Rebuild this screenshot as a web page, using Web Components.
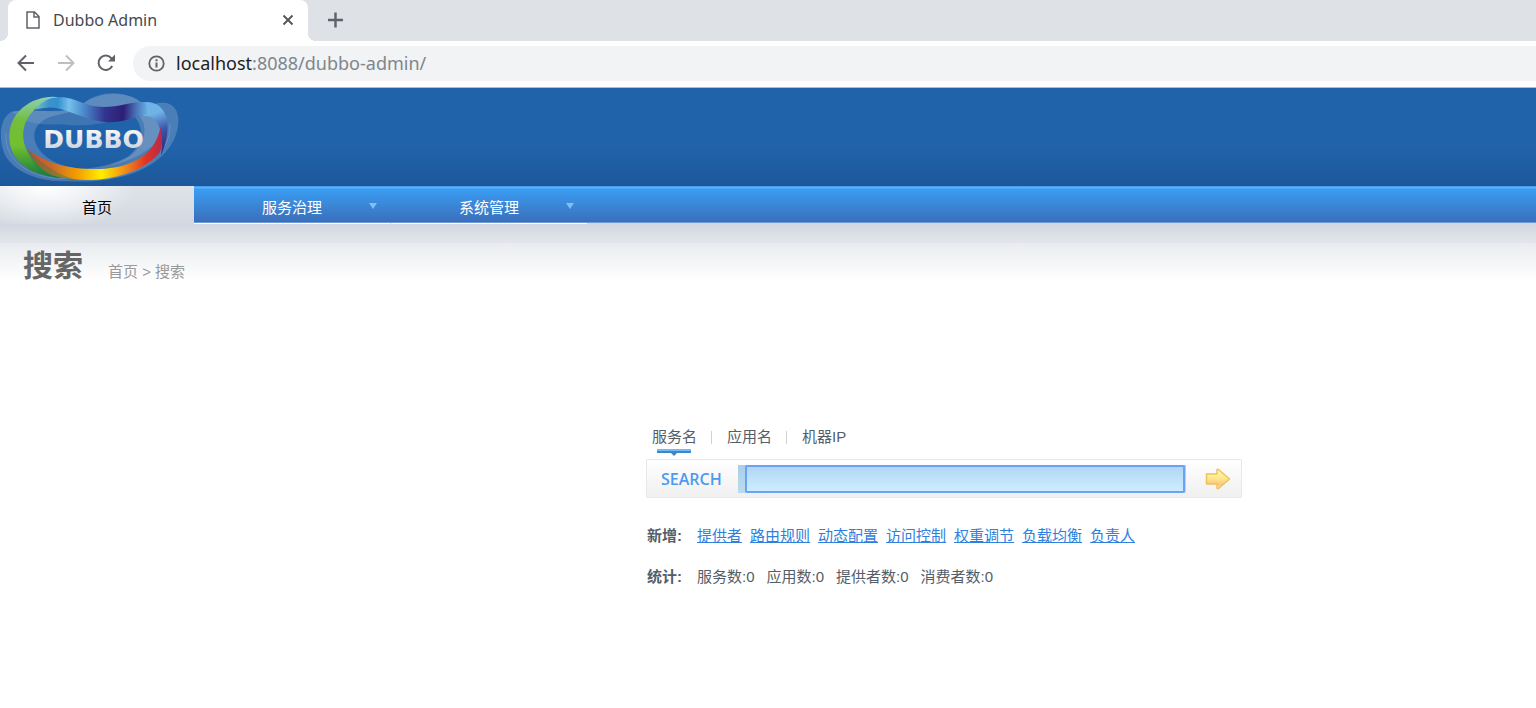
<!DOCTYPE html>
<html lang="zh-CN">
<head>
<meta charset="utf-8">
<title>Dubbo Admin</title>
<style>
  body { margin: 0; background: #fff; color: #545e69; font-family: "Liberation Sans", "Noto Sans CJK SC", sans-serif; font-size: 15px; line-height: 20px; }
</style>
</head>
<body>
<dubbo-page></dubbo-page>
<script>
function define(name, html) {
  const template = document.createElement('template');
  template.innerHTML = html;
  customElements.define(name, class extends HTMLElement {
    constructor() {
      super();
      this.attachShadow({ mode: 'open' }).append(template.content.cloneNode(true));
    }
  });
}

define('browser-tabs', `
<style>
  :host { display: flex; height: 41px; padding-left: 8px; background: #dee1e6; font: 16px/20px "Noto Sans", sans-serif; color: #45494d; }
  button { border: 0; padding: 0; background: none; display: flex; }
  .tab { position: relative; display: flex; align-items: center; box-sizing: border-box; width: 300px; padding: 0 14px 2px 18px; gap: 13px; background: #fff; border-radius: 8px 8px 0 0; }
  .tab::before, .tab::after { content: ""; position: absolute; bottom: 0; width: 8px; height: 8px; }
  .tab::before { left: -8px; background: radial-gradient(circle at 0 0, #dee1e6 8px, #fff 8px); }
  .tab::after { right: -8px; background: radial-gradient(circle at 100% 0, #dee1e6 8px, #fff 8px); }
  .name { flex: 1; }
  .new { margin: 12px 20px; }
</style>
<div class="tab">
  <svg width="14" height="18" viewBox="0 0 14 18" fill="none" stroke="#5f6368" stroke-width="1.5"><path d="M1 1H8.500L13 5.500V17H1ZM8 1V6H13"/></svg>
  <span class="name"><slot></slot></span>
  <button aria-label="Close tab"><svg width="12" height="12" viewBox="0 0 12 12" stroke="#505459" stroke-width="1.800"><path d="M1.500 1.500L10.500 10.500M10.500 1.500L1.500 10.500"/></svg></button>
</div>
<button class="new" aria-label="New tab"><svg width="15" height="16" viewBox="0 0 15 16" stroke="#5f6368" stroke-width="2.400"><path d="M7.500 .500V15.500M0 8H15"/></svg></button>`);

define('browser-toolbar', `
<style>
  :host { display: flex; align-items: center; height: 44px; padding: 0 0 2px 17px; background: #fff; border-bottom: 1px solid #b8bcc2; }
  button { border: 0; padding: 0; width: 18px; height: 18px; margin-right: 22px; background: none; display: flex; }
  svg { fill: none; stroke: #5f6368; stroke-width: 2; flex: none; }
  .address { flex: 1; display: flex; align-items: center; gap: 11px; height: 35px; margin-left: -4px; padding-left: 15px; background: #f1f3f4; border-radius: 18px 0 0 18px; }
  [role=textbox] { font: 18px/24px "Noto Sans", sans-serif; color: #80868b; }
  b { font-weight: 400; color: #202124; }
</style>
<button aria-label="Back"><svg width="18" height="18" viewBox="0 0 18 18"><path d="M17 9H2M9 1.500L1.500 9L9 16.500"/></svg></button>
<button aria-label="Forward" disabled><svg width="18" height="18" viewBox="0 0 18 18" style="stroke:#bdbfc2"><path d="M1 9H16M9 1.500L16.500 9L9 16.500"/></svg></button>
<button aria-label="Reload"><svg width="19" height="18" viewBox="0 0 19 18"><path d="M15.200 12A7.200 7.200 0 1 1 14.500 4.300L16.500 6.500"/><path d="M18 .500V7.500H11Z" fill="#5f6368" stroke="none"/></svg></button>
<div class="address">
  <svg width="17" height="17" viewBox="0 0 17 17"><circle cx="8.500" cy="8.500" r="7.200" stroke-width="1.800"/><path d="M8.500 7.500V12.500M8.500 4.300V6.200"/></svg>
  <span role="textbox" aria-label="Address"><b>localhost</b>:8088/dubbo-admin/</span>
</div>`);

define('dubbo-logo', `
<style>
  :host { display: block; width: 200px; }
  svg { display: block; }
</style>
<svg width="200" height="98" viewBox="0 6 600 294" role="img" aria-label="Dubbo">
  <defs>
    <linearGradient id="g" x1="0" y1="0" x2="0" y2="1"><stop offset="0" stop-color="#8ed0b4"/><stop offset=".3" stop-color="#72bd3c"/><stop offset=".6" stop-color="#73bf2f"/><stop offset="1" stop-color="#137a3b"/></linearGradient>
    <linearGradient id="t" gradientUnits="userSpaceOnUse" x1="105" y1="60" x2="445" y2="75"><stop offset="0" stop-color="#7cc3c0"/><stop offset=".12" stop-color="#3b93cd"/><stop offset=".2" stop-color="#3391cf"/><stop offset=".3" stop-color="#76c0ec"/><stop offset=".42" stop-color="#4d8fce"/><stop offset=".62" stop-color="#33348f"/><stop offset=".78" stop-color="#2e1e75"/><stop offset=".9" stop-color="#4b78bd"/><stop offset="1" stop-color="#6db3e6"/></linearGradient>
    <linearGradient id="r"><stop offset="0" stop-color="#d24b2c"/><stop offset=".18" stop-color="#c9692a"/><stop offset=".38" stop-color="#f4a000"/><stop offset=".55" stop-color="#ffee00"/><stop offset=".73" stop-color="#f18b16"/><stop offset=".88" stop-color="#e13424"/><stop offset="1" stop-color="#b32c4d"/></linearGradient>
    <linearGradient id="p" gradientUnits="userSpaceOnUse" x1="440" y1="60" x2="490" y2="200"><stop offset="0" stop-color="#6db3e6"/><stop offset=".2" stop-color="#6db3e6"/><stop offset=".55" stop-color="#3d55aa"/><stop offset="1" stop-color="#33257c"/></linearGradient>
    <linearGradient id="w" x1="0" y1="0" x2="0" y2="1"><stop offset="0" stop-color="#fff"/><stop offset="1" stop-color="#c4cbd5"/></linearGradient>
  </defs>
  <g fill="#a5b9d2">
    <path opacity=".32" d="M35 77C-5 95-5 175 20 215C55 265 125 288 210 286C340 292 445 258 495 200C540 155 555 65 500 51Q465 47 440 66C405 15 305 5 250 52C195 92 100 65 35 77ZM160 90C245 66 390 54 423 96C450 140 422 195 374 220C300 260 190 260 130 205C90 165 90 110 160 90Z"/>
    <path opacity=".22" d="M250 53C305 10 405 15 440 66C410 92 270 130 190 115Q125 119 75 104L35 78C110 63 195 95 250 53Z"/>
    <path opacity=".3" d="M423 90Q505 55 475 162C440 205 350 248 250 249Q330 241 383 212C430 178 432 125 405 94Z"/>
  </g>
  <path fill="none" stroke="#8ba9ce" stroke-width="3" opacity=".4" d="M18 140C10 235 110 282 200 277M510 115C515 200 425 270 290 281"/>
  <path fill="url(#p)" d="M434 48C505 44 521 125 483 208Q490 160 480 128C471 101 455 88 430 90Z"/>
  <path fill="url(#g)" d="M178 34C115 23 28 66 28 153C28 223 88 269 184 276Q136 256 102 224C55 175 60 104 112 64Q137 42 178 34Z"/>
  <path fill="url(#t)" d="M105 71Q133 32 183 34C228 34 252 63 311 63C362 63 388 47 437 48L444 90Q438 86 428 88C390 98 355 114 307 107C241 98 190 62 145 65Q120 66 105 71Z"/>
  <path fill="url(#r)" d="M81 188C155 245 239 250 300 249C386 247 466 211 481 124Q492 172 479 201C440 246 358 280 270 282Q205 282 155 268Q108 246 81 188Z"/>
  <path fill="#17804a" opacity=".35" d="M81 188Q154 263 231 281Q153 278 115 253Q96 231 81 188Z"/>
  <text x="130" y="187" font-family="DejaVu Sans, sans-serif" font-weight="700" font-size="75" fill="url(#w)">DUBBO</text>
</svg>`);

define('main-nav', `
<style>
  :host { display: block; }
  nav { display: flex; height: 38px; background: linear-gradient(#2f8ae0 0, #5cb1fb 1px, #5cb1fb 2px, #3a9df3 3px, #3a6fba 36px, #6d99d5 36px, #6d99d5 37px, #d1d6e0 37px); }
  a { position: relative; box-sizing: border-box; width: 196px; text-align: center; line-height: 44px; color: #fff; text-decoration: none; border-bottom: 1px solid #fff; }
  .menu + .menu { margin-left: 1px; }
  a.current { width: 194px; color: #000; border: 0; background: radial-gradient(ellipse 90px 44px at 46px 0, #fff, rgba(255,255,255,0)), linear-gradient(#dfe3e9, #d3d9e1); }
  .menu::after { content: ""; position: absolute; right: 13px; top: 17px; border: 4px solid transparent; border-top: 6px solid #80bef5; border-bottom: 0; }
</style>
<nav>
  <a class="current" href="#home">首页</a>
  <a class="menu" href="#governance">服务治理</a>
  <a class="menu" href="#system">系统管理</a>
</nav>`);

define('page-title', `
<style>
  :host { display: flex; align-items: flex-start; gap: 25px; height: 61px; padding-left: 23px; background: linear-gradient(#d1d6e0, #e3e6eb 19px, #e9ecef 19px, #fff 57px); color: #999; line-height: 96px; }
  h1 { margin: 0; font-size: 30px; line-height: 84px; color: #666; }
</style>
<h1>搜索</h1><span>首页 &gt; 搜索</span>`);

define('service-search', `
<style>
  :host { display: block; width: 596px; }
  .tabs { display: flex; padding-left: 6px; height: 33px; }
  .tabs button { position: relative; border: 0; padding: 0; height: 20px; background: none; font: inherit; line-height: 22px; color: inherit; }
  .tabs button + button { margin-left: 14px; padding-left: 16px; }
  .tabs button + button::before { content: ""; position: absolute; left: 0; top: 5px; width: 1px; height: 13px; background: #d0d0d8; }
  .tabs [aria-selected=true]::after { content: ""; position: absolute; left: 5px; top: 23px; width: 34px; height: 4px; background: linear-gradient(#72b9f5 50%, #3b87cc 50%); }
  .tabs [aria-selected=true]::before { content: ""; position: absolute; left: 19px; top: 27px; border: 3px solid transparent; border-top: 3px solid #3b87cc; border-bottom: 0; }
  form { display: flex; align-items: center; box-sizing: border-box; height: 39px; padding: 0 10px 0 14px; border: 1px solid #e6e8ec; border-radius: 2px; background: linear-gradient(#fff, #f0f0f0); }
  label { width: 77px; font: 600 16px/20px "Open Sans", sans-serif; color: #4b9bef; }
  .field { flex: 1; display: flex; padding: 0 1px 0 7px; height: 28px; background: linear-gradient(#a9cfec, #bbdcec); }
  input { flex: 1; box-sizing: border-box; min-width: 0; padding: 0 6px; border: 2px solid #6aa3f5; border-radius: 2px; outline: 0; background: linear-gradient(#b2d5f5, #cdeeff); font: inherit; }
  .go { display: flex; margin-left: 19px; border: 0; padding: 0; background: none; }
</style>
<div class="tabs" role="tablist">
  <button role="tab" aria-selected="true">服务名</button><button role="tab" aria-selected="false">应用名</button><button role="tab" aria-selected="false">机器IP</button>
</div>
<form>
  <label for="keyword">SEARCH</label>
  <span class="field"><input id="keyword" type="text"></span>
  <button class="go" type="button" aria-label="Search">
    <svg width="26" height="22" viewBox="0 0 26 22"><defs><linearGradient id="a" x1="0" y1="0" x2="0" y2="1"><stop stop-color="#fffdb0"/><stop offset=".5" stop-color="#ffe58a"/><stop offset=".8" stop-color="#fec183"/><stop offset="1" stop-color="#fff2a6"/></linearGradient></defs><path d="M1.500 6H12V1.500H13.500L24.500 11L13.500 20.500H12V16H1.500Z" fill="url(#a)" stroke="#ebc45e" stroke-width="1.500" stroke-linejoin="round"/></svg>
  </button>
</form>`);

define('info-row', `
<style>
  :host { display: flex; gap: 14px; padding-left: 1px; }
  b { width: 36px; }
  div { display: flex; gap: var(--item-gap, 12px); }
  ::slotted(a) { color: #2f80dd; text-decoration: underline; }
</style>
<b><slot name="label"></slot></b><div><slot></slot></div>`);

define('dubbo-page', `
<style>
  :host { display: block; }
  header { height: 98px; background: linear-gradient(#2063ab, #2063ab 60%, #1c5799); }
  main { padding: 141px 0 40px calc(50% - 122px); }
  info-row { margin-top: 28px; }
  info-row + info-row { margin-top: 21px; }
  .links { --item-gap: 8px; }
</style>
<browser-tabs>Dubbo Admin</browser-tabs>
<browser-toolbar></browser-toolbar>
<header><dubbo-logo></dubbo-logo></header>
<main-nav></main-nav>
<page-title></page-title>
<main>
  <service-search></service-search>
  <info-row class="links"><span slot="label">新增:</span><a href="#provider">提供者</a><a href="#routes">路由规则</a><a href="#config">动态配置</a><a href="#access">访问控制</a><a href="#weight">权重调节</a><a href="#balance">负载均衡</a><a href="#owner">负责人</a></info-row>
  <info-row><span slot="label">统计:</span><span>服务数:0</span><span>应用数:0</span><span>提供者数:0</span><span>消费者数:0</span></info-row>
</main>`);
</script>
</body>
</html>
